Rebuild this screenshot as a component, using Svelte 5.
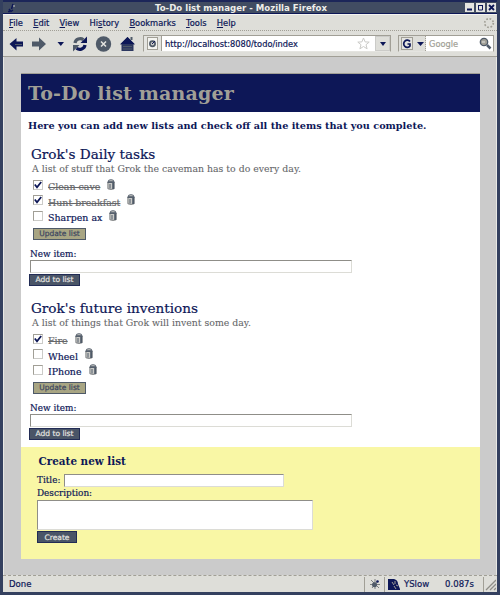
<script>
  const menu = [
    ['', 'F', 'ile'], ['', 'E', 'dit'], ['', 'V', 'iew'], ['Hi', 's', 'tory'],
    ['', 'B', 'ookmarks'], ['', 'T', 'ools'], ['', 'H', 'elp']
  ];
  const lists = [
    {
      title: "Grok's Daily tasks",
      text: 'A list of stuff that Grok the caveman has to do every day.',
      items: [['Clean cave', true], ['Hunt breakfast', true], ['Sharpen ax', false]]
    },
    {
      title: "Grok's future inventions",
      text: 'A list of things that Grok will invent some day.',
      items: [['Fire', true], ['Wheel', false], ['IPhone', false]]
    }
  ];
</script>

<div class="window">
  <header class="titlebar">
    <svg class="appicon" width="10" height="10" viewBox="0 0 10 10"><path d="M6 1L4.500 6M2 6l2 2.500L6 7M1 8.500h2" stroke="#0d1757" stroke-width="1.500" fill="none" /><path d="M7 2v2" stroke="#cbcbc8" /></svg>
    <span class="caption">To-Do list manager - Mozilla Firefox</span>
    <div class="winbtns">
      <svg width="9" height="9"><rect width="9" height="9" fill="#e4e4e0" /><path d="M2 6.500h5" stroke="#0d1757" stroke-width="2" /></svg>
      <svg width="9" height="9"><rect width="9" height="9" fill="#e4e4e0" /><path d="M2 2.500h5M2.500 2v5h4V2" stroke="#0d1757" fill="none" /></svg>
      <svg width="9" height="9"><rect width="9" height="9" fill="#e4e4e0" /><path d="M2 2l5 5M7 2L2 7" stroke="#0d1757" stroke-width="1.800" /></svg>
    </div>
  </header>

  <nav class="menu">
    {#each menu as [a, u, b]}
      <span>{a}<u>{u}</u>{b}</span>
    {/each}
    <svg class="throbber" width="12" height="12" viewBox="-6 -6 12 12"><circle r="4.300" fill="none" stroke="#a19f96" stroke-width="1.700" stroke-dasharray="1.700 1.680" /></svg>
  </nav>

  <div class="toolbar">
    <svg width="134" height="24" viewBox="0 0 134 24">
      <path d="M6.500 12l7-6v3.500h6.500v5h-6.500v4z" fill="#0d1757" />
      <path d="M12 12.500h7" stroke="#4f5a68" />
      <path d="M43 12l-7-6.500v4h-7v5h7v4z" fill="#4f5a68" />
      <path d="M54.500 10h6.500l-3.200 4z" fill="#0d1757" />
      <path d="M72 11a5.300 5 0 0 1 8.500-3.300" fill="none" stroke="#4f5a68" stroke-width="3.200" />
      <path d="M82 13a5.300 5 0 0 1-8.500 3.300" fill="none" stroke="#0d1757" stroke-width="3.200" />
      <path d="M84 4.500v6.500h-6.500z" fill="#0d1757" /><path d="M70 19.500v-6.500h6.500z" fill="#4f5a68" />
      <circle cx="100.500" cy="12" r="7.700" fill="#4f5a68" />
      <path d="M98 9.500l5 5M103 9.500l-5 5" stroke="#e4e4e0" stroke-width="1.500" />
      <path d="M117 12.500l7.500-7.500 7.500 7.500h-1.500v6.500h-12v-6.500z" fill="#2c3760" />
      <path d="M117.500 12l7-7 7 7z" fill="#0d1757" />
      <path d="M128.500 8V5" stroke="#4f5a68" stroke-width="2" />
      <path d="M120 14.500h9M120 17h9" stroke="#4f5a68" />
    </svg>
    <div class="address">
      <div class="site"><svg width="11" height="13" viewBox="0 0 11 13"><rect x=".5" y=".5" width="10" height="12" fill="#f4f4f0" stroke="#a19f96" /><circle cx="5.500" cy="6.800" r="2.600" fill="#cbcbc8" stroke="#4f5a68" stroke-width="1.700" /><path d="M5 7l3-3" stroke="#0d1757" /></svg></div>
      <span class="url">http://localhost:8080/todo/index</span>
      <svg class="star" width="13" height="13" viewBox="0 0 13 13"><path d="M6.500 1l1.600 3.900 4.100.2-3.200 2.600 1.100 4.100-3.600-2.300-3.600 2.300L4 7.700.8 5.100l4.100-.2z" fill="#fff" stroke="#cbcbc8" /></svg>
      <div class="drop"><svg width="6" height="4"><path d="M0 0h6L3 4z" fill="#0d1757" /></svg></div>
    </div>
    <div class="search">
      <div class="engine">
        <svg width="12" height="13" viewBox="0 0 12 13"><rect x=".5" y=".5" width="11" height="12" fill="#e4e4e0" stroke="#a19f96" /><path d="M9 4.500A3.500 3.700 0 1 0 9 9V7H6.500" fill="none" stroke="#0d1757" stroke-width="1.700" /></svg>
        <svg width="7" height="4"><path d="M0 0h7L3.500 4z" fill="#0d1757" /></svg>
      </div>
      <span class="hint">Google</span>
      <svg class="glass" width="13" height="13" viewBox="0 0 13 13"><circle cx="5" cy="5" r="3.700" fill="#a19f96" stroke="#4f5a68" stroke-width="1.300" /><path d="M3 5h3" stroke="#e4e4e0" /><path d="M8 8l3.500 3.500" stroke="#4f5a68" stroke-width="2.500" /></svg>
    </div>
  </div>

  <main class="viewport">
    <div class="page">
      <h1>To-Do list manager</h1>
      <p class="intro">Here you can add new lists and check off all the items that you complete.</p>
      {#each lists as list, n}
        <section class="list">
          <h2>{list.title}</h2>
          <p class="about">{list.text}</p>
          {#each list.items as [name, done]}
            <div class="item">
              <span class="check">
                {#if done}<svg width="8" height="8" viewBox="0 0 8 8"><path d="M.8 3.500l2.200 2.700L7.200 1" fill="none" stroke="#0d1757" stroke-width="1.800" /></svg>{/if}
              </span>
              <span class="name" class:done>{name}</span>
              <svg class="bin" width="8" height="11" viewBox="0 0 8 11"><path d="M.9 3h6.200v6.800q-3.100 1.200-6.200 0z" fill="#cbcbc8" stroke="#7c7f80" /><path d="M5.200 4h2v6h-2z" fill="#4f5a68" /><path d="M1 2.700q0-2 3-2t3 2z" fill="#cbcbc8" stroke="#4f5a68" stroke-width=".9" /><path d="M.5 3.400h7M3 5v4.500" stroke="#4f5a68" /></svg>
            </div>
          {/each}
          <button class="update">Update list</button>
          <label for="new{n}">New item:</label>
          <input class="newitem" id="new{n}" />
          <button class="dark add">Add to list</button>
        </section>
      {/each}
      <section class="create">
        <h3>Create new list</h3>
        <div class="titlerow"><label for="t">Title:</label><input id="t" /></div>
        <label class="desc" for="d">Description:</label>
        <textarea id="d"></textarea>
        <button class="dark small">Create</button>
      </section>
    </div>
  </main>

  <footer class="status">
    <span class="state">Done</span>
    <div class="cell bug"><svg width="12" height="12" viewBox="0 0 12 12"><path d="M2 2l8 8M1 6.500h10M6 1v10M3 10l6-7" stroke="#7c7f80" stroke-width="1" /><circle cx="5.500" cy="6.800" r="2.500" fill="#4f5a68" /><circle cx="8.500" cy="3.500" r="1.300" fill="#0d1757" /></svg></div>
    <div class="cell slow">
      <svg width="12" height="12" viewBox="0 0 12 12"><path d="M0 1h6q4 1 4 5l2 5v1H0z" fill="#0d1757" /><path d="M4 4l2 3M7 3v3M6 8l2 3M8 7l2 1" stroke="#a19f96" fill="none" /></svg>
      <span>YSlow</span><span class="time">0.087s</span>
    </div>
    <div class="cell grip"><svg width="11" height="13" viewBox="0 0 11 13"><path d="M1 12L11 2M5 12l6-6M9 12l2-2" stroke="#8f8e88" stroke-width="1.300" /></svg></div>
  </footer>
</div>

<style>
  :global(body) { margin: 0; }
  * { box-sizing: border-box; }
  .window {
    width: 500px; height: 595px; display: flex; flex-direction: column; overflow: hidden;
    background: #deded9; color: #0d1757; font: 8.500px/12px "DejaVu Sans", sans-serif;
    border: solid #34405f; border-width: 0 3px 3px; white-space: nowrap;
    -webkit-text-stroke-width: .2px;
  }
  svg { display: block; flex: none; }
  .titlebar {
    height: 14px; flex: none; display: flex; align-items: center; color: #eeeeea;
    background: #414c62; border-top: 2px solid #1c2659; border-bottom: 1px solid #0d1757;
  }
  .appicon { margin-left: 4px; }
  .caption { flex: 1; padding-left: 138px; font-weight: bold; font-size: 8.600px; -webkit-text-stroke-width: 0; }
  .winbtns { display: flex; gap: 2px; padding-right: 1px; }
  .menu { height: 17px; flex: none; display: flex; align-items: center; gap: 10.300px; padding-left: 6px; font-size: 8.300px; border-top: 1px solid #f4f4f0; border-bottom: 1px dotted #a19f96; }
  .throbber { margin-left: auto; margin-right: 2px; }
  .toolbar { height: 26px; flex: none; display: flex; align-items: center; border-bottom: 1px solid #a19f96; }
  .address { margin-left: 6px; width: 248px; height: 17px; background: #fff; border: 1px solid #a19f96; border-bottom-color: #e4e4e0; display: flex; align-items: center; }
  .site { width: 18px; height: 15px; padding: 1px 3px; background: #e4e4e0; border-right: 1px solid #a19f96; }
  .url { padding-left: 3px; flex: 1; font-size: 8.250px; }
  .star { margin-right: 5px; }
  .drop { width: 15px; height: 15px; display: flex; align-items: center; justify-content: center; background: #deded9; border: 1px solid #cbcbc8; }
  .search { margin-left: 7px; width: 96px; height: 17px; background: #fff; border: 1px solid #a19f96; border-bottom-color: #e4e4e0; display: flex; align-items: center; }
  .engine { width: 27px; height: 15px; display: flex; align-items: center; gap: 4px; padding-left: 2px; background: #deded9; border-right: 1px dotted #a19f96; }
  .hint { padding-left: 3px; flex: 1; color: #a19f96; font-size: 8.250px; }
  .glass { margin-right: 1px; }
  .viewport { flex: 1; background: #cbcbcb; padding: 16px 14px 0 17px; border: solid #e8e8e4; border-width: 0 1px; font-family: "DejaVu Serif", serif; }
  .page { width: 459px; height: 486px; background: #fff; display: flex; flex-direction: column; }
  h1, h2, h3, p { margin: 0; }
  h1 { height: 39px; flex: none; padding-left: 7px; background: #0d1757; color: #a19f96; font: bold 19px/38px "DejaVu Serif", serif; letter-spacing: .18px; border-top: 1px solid #a19f96; -webkit-text-stroke-width: 0; }
  .intro { padding: 7px 0 0 7px; height: 29px; flex: none; font-weight: bold; font-size: 9.700px; line-height: 14px; -webkit-text-stroke-width: 0; }
  .list { height: 154px; flex: none; padding: 5px 0 0 9px; display: flex; flex-direction: column; align-items: flex-start; }
  h2 { padding-left: 1px; font: 13.600px/16px "DejaVu Serif", serif; }
  .about { padding-left: 2px; height: 15px; font-size: 9.360px; line-height: 13px; color: #66676a; -webkit-text-stroke-width: .1px; }
  .item { height: 15.500px; flex: none; display: flex; align-items: center; padding-left: 3px; }
  .check { width: 10px; height: 10px; border: 1px solid #cbcbc8; border-top-color: #a19f96; border-left-color: #a19f96; margin-right: 5px; }
  .name { font-size: 9.450px; padding-top: 5px; }
  .done { color: #66676a; text-decoration: line-through; }
  .bin { margin-left: 7px; margin-top: -1px; }
  button { display: block; padding: 0; font: 7.500px/9px "DejaVu Sans", sans-serif; border-radius: 0; -webkit-text-stroke-width: .2px; }
  .update { margin: 4px 0 0 3px; width: 53px; height: 12px; flex: none; background: #a8a583; color: #3c4660; border: 1px solid #4f5a68; }
  label { font-size: 8.900px; line-height: 12px; margin-top: 8px; }
  input, textarea { display: block; margin: 0; padding: 0; background: #fff; border: 1px solid #dcdcd6; border-top-color: #8f8e88; border-left-color: #8f8e88; border-radius: 0; resize: none; flex: none; }
  .newitem { width: 322px; height: 13px; }
  .dark { width: 51px; height: 12px; flex: none; margin-top: 1px; background: #4a5567; color: #e4e4e0; border: 1px solid #222c55; }
  .add { margin-left: -1px; }
  .create { height: 112px; flex: none; margin-top: -2px; background: #f9f7a5; padding: 7px 0 0 16px; display: flex; flex-direction: column; align-items: flex-start; }
  h3 { padding-left: 1.500px; font: bold 10.400px/15px "DejaVu Serif", serif; height: 19px; -webkit-text-stroke-width: 0; }
  .titlerow { display: flex; height: 14px; align-items: center; gap: 3px; }
  .titlerow label { margin: 0; width: 24px; }
  .titlerow input { width: 220px; height: 13px; }
  .desc { margin: 0; height: 13px; line-height: 13px; }
  textarea { width: 276px; height: 30px; }
  .small { width: 40px; }
  .status { height: 17px; flex: none; display: flex; align-items: center; border-top: 1px dashed #a19f96; }
  .state { padding-left: 6px; flex: 1; }
  .cell { height: 15px; display: flex; align-items: center; border-left: 1px solid #a19f96; }
  .bug { width: 20px; padding-left: 4px; }
  .slow { width: 99px; padding-left: 3px; }
  .slow span { padding-left: 4px; }
  .slow .time { padding-left: 16px; }
  .grip { width: 14px; padding-left: 1px; }
</style>
